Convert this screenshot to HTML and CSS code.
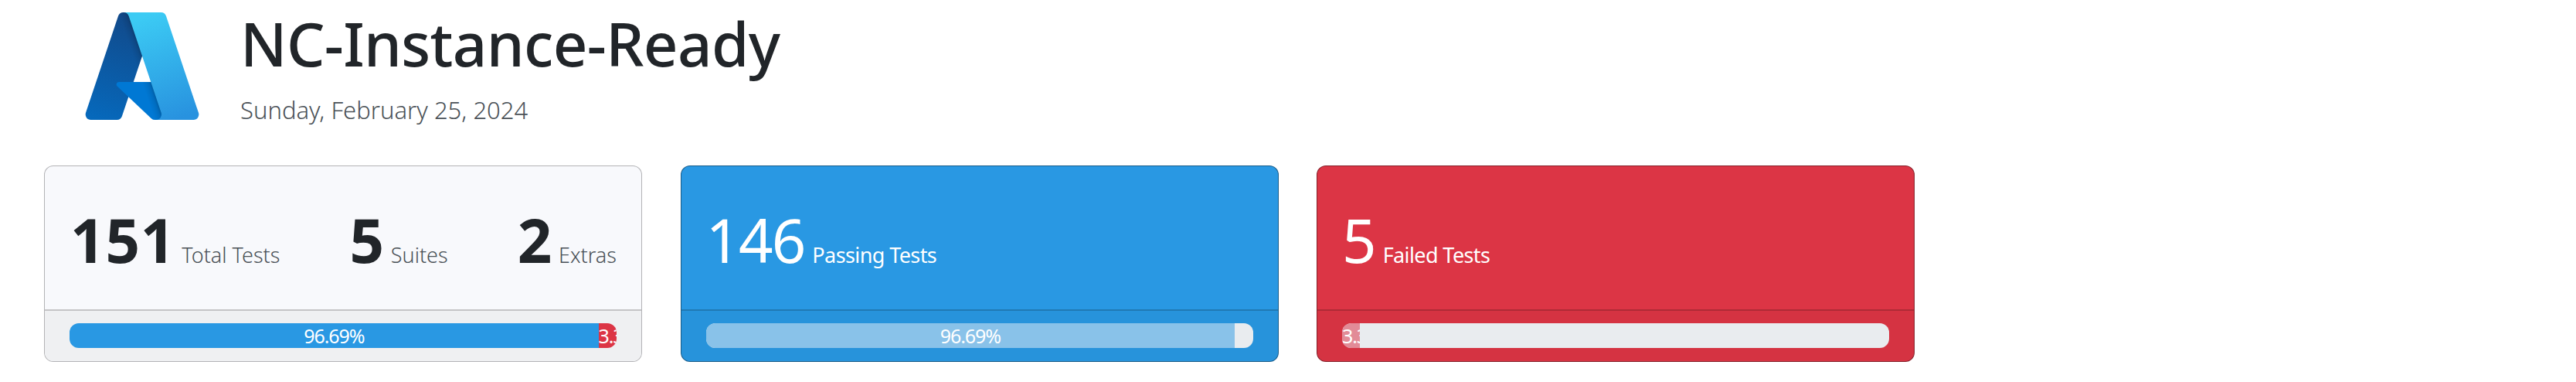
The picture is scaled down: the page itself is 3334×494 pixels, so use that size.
FILE: index.html
```html
<!DOCTYPE html>
<html lang="en">
<head>
<meta charset="utf-8">
<title>NC-Instance-Ready</title>
<link rel="stylesheet" href="styles.css">
</head>
<body>
<header class="header">
  <svg class="logo" viewBox="0 0 96 96" preserveAspectRatio="none" aria-hidden="true">
    <defs>
      <linearGradient id="left" gradientUnits="userSpaceOnUse" x1="42" y1="12" x2="16" y2="91"><stop offset="0" stop-color="#114a8b"/><stop offset="1" stop-color="#0669bc"/></linearGradient>
      <linearGradient id="shade" gradientUnits="userSpaceOnUse" x1="51.5" y1="50" x2="45" y2="52.2"><stop offset="0" stop-opacity=".3"/><stop offset=".07" stop-opacity=".2"/><stop offset=".32" stop-opacity=".1"/><stop offset=".62" stop-opacity=".05"/><stop offset="1" stop-opacity="0"/></linearGradient>
      <linearGradient id="right" gradientUnits="userSpaceOnUse" x1="48" y1="10" x2="75" y2="89"><stop offset="0" stop-color="#3ccbf4"/><stop offset="1" stop-color="#2892df"/></linearGradient>
    </defs>
    <path fill="url(#left)" d="M33.338 6.544h26.038l-27.03 80.087a4.152 4.152 0 0 1-3.933 2.824H8.149a4.145 4.145 0 0 1-3.928-5.47L29.404 9.368a4.152 4.152 0 0 1 3.934-2.825z"/>
    <path fill="#0078d4" d="M71.175 60.261h-41.29a1.911 1.911 0 0 0-1.305 3.309l26.532 24.764a4.171 4.171 0 0 0 2.846 1.121h23.38z"/>
    <path fill="url(#shade)" d="M33.338 6.544a4.118 4.118 0 0 0-3.943 2.879L4.252 83.917a4.14 4.14 0 0 0 3.908 5.538h20.787a4.443 4.443 0 0 0 3.41-2.9l5.014-14.777 17.91 16.705a4.237 4.237 0 0 0 2.666.972H81.24L71.024 60.261l-29.781.007L59.47 6.544z"/>
    <path fill="url(#right)" d="M66.595 9.364a4.145 4.145 0 0 0-3.928-2.82H33.648a4.146 4.146 0 0 1 3.928 2.82l25.184 74.62a4.146 4.146 0 0 1-3.928 5.472h29.02a4.146 4.146 0 0 0 3.927-5.472z"/>
  </svg>
  <div class="heading">
    <h1 class="title">NC-Instance-Ready</h1>
    <p class="date">Sunday, February 25, 2024</p>
  </div>
</header>
<main class="cards">
  <section class="card card-total">
    <div class="card-body">
      <div class="stat"><span class="num">151</span><span class="label">Total Tests</span></div>
      <div class="stat"><span class="num">5</span><span class="label">Suites</span></div>
      <div class="stat"><span class="num">2</span><span class="label">Extras</span></div>
    </div>
    <div class="card-footer"><div class="progress"><div class="bar bar-pass" style="width:96.69%"><span>96.69%</span></div><div class="bar bar-fail" style="width:3.31%"><span>3.31%</span></div></div></div>
  </section>
  <section class="card card-pass">
    <div class="card-body"><div class="stat"><span class="num">146</span><span class="label">Passing Tests</span></div></div>
    <div class="card-footer"><div class="progress"><div class="bar bar-soft-pass" style="width:96.69%"><span>96.69%</span></div></div></div>
  </section>
  <section class="card card-fail">
    <div class="card-body"><div class="stat"><span class="num">5</span><span class="label">Failed Tests</span></div></div>
    <div class="card-footer"><div class="progress"><div class="bar bar-soft-fail" style="width:3.31%"><span>3.31%</span></div></div></div>
  </section>
</main>
</body>
</html>
```
FILE: styles.css
```css
* { box-sizing: border-box; }
body {
  margin: 0;
  padding: 5px 0 0 57px;
  background: #fff;
  color: #212529;
  font-family: "Noto Sans", sans-serif;
}
.header { display: flex; height: 209px; padding-left: 47px; }
.logo { width: 160px; height: 161px; flex: none; }
.heading { margin-left: 47px; white-space: nowrap; }
.title {
  margin: 0;
  font-size: 78px;
  font-weight: 500;
  line-height: 102px;
  letter-spacing: -.65px;
}
.date { margin: 14px 0 0; font-size: 31px; font-weight: 300; line-height: 42px; color: #4a5157; }
.cards { display: grid; grid-template-columns: repeat(3, 774px); gap: 49.5px; }
.card {
  display: flex;
  flex-direction: column;
  height: 254px;
  border: 1px solid rgba(0, 0, 0, .4);
  border-radius: 12px;
}
.card-body { flex: 1; display: flex; justify-content: space-between; padding: 42px 32px 0; }
.stat { display: flex; align-items: baseline; gap: 10px; white-space: nowrap; }
.num { font-size: 78px; line-height: 106px; letter-spacing: -2px; }
.label { font-size: 27px; letter-spacing: -.6px; }
.card-footer {
  height: 67px;
  padding: 16px 32px 0;
  border-top: 2px solid rgba(0, 0, 0, .18);
  border-radius: 0 0 11px 11px;
  background: rgba(0, 0, 0, .03);
}
.progress { display: flex; height: 32px; overflow: hidden; border-radius: 12px; background: #e9ecef; }
.bar {
  display: flex;
  align-items: center;
  justify-content: center;
  overflow: hidden;
  color: #fff;
  font-size: 25px;
  letter-spacing: -1.1px;
}
.card-total { background: #f8f9fc; border-color: rgba(0, 0, 0, .28); }
.card-total .card-body { padding-left: 33px; }
.card-total .stat { gap: 8px; }
.card-total .num { font-weight: 700; letter-spacing: .8px; }
.card-total .label { color: #4a5157; font-weight: 300; letter-spacing: 0; }
.card-total .card-footer { background: #eff0f2; }
.card-pass { background: #2998e3; color: #fff; }
.card-fail { background: #dc3545; color: #fff; }
.bar-pass { background: #2998e3; }
.bar-fail { background: #dc3545; justify-content: flex-start; }
.bar-soft-pass { background: #89c2e9; }
.bar-soft-fail { background: #e28b97; justify-content: flex-start; }
```
